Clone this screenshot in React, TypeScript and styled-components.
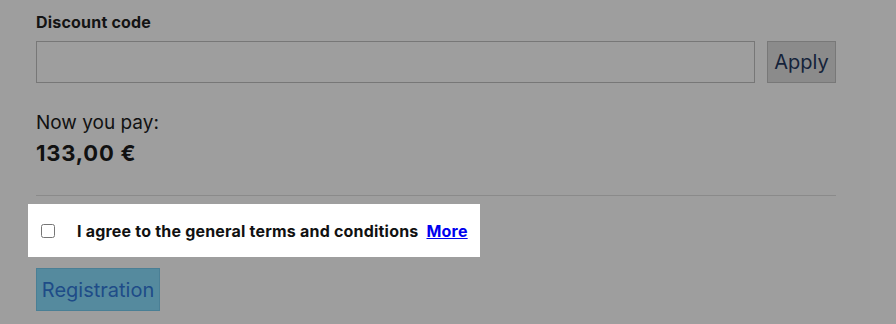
import React from "react";
import styled, { createGlobalStyle } from "styled-components";

const Global = createGlobalStyle`
  html, body { margin: 0; padding: 0; background: #9e9e9e; }
  body { font-family: "Inter", "Lato", "Liberation Sans", sans-serif; color: #111; }
`;

const Page = styled.div`
  width: 800px;
  padding: 12px 0 0 36px;
  display: flex;
  flex-direction: column;
`;

const Label = styled.label`
  font-size: 16px;
  font-weight: 700;
  letter-spacing: 0.2px;
  line-height: 20px;
  color: #141414;
`;

const CodeRow = styled.div`
  display: flex;
  gap: 12px;
  margin-top: 9px;
`;

const CodeInput = styled.input`
  flex: 1;
  height: 42px;
  box-sizing: border-box;
  border: 1px solid #777;
  background: transparent;
  font: inherit;
`;

const ApplyButton = styled.button`
  width: 69px;
  height: 42px;
  box-sizing: border-box;
  border: 1px solid #787878;
  background: #8b8b8b;
  color: #15233a;
  font-family: inherit;
  font-size: 20px;
  padding: 0;
`;

const PayLabel = styled.div`
  margin-top: 28px;
  font-size: 19px;
  line-height: 24px;
`;

const Price = styled.div`
  margin-top: 5px;
  font-size: 22px;
  font-weight: 700;
  letter-spacing: 0.8px;
  line-height: 26px;
`;

const Divider = styled.hr`
  margin: 29px 0 0;
  border: 0;
  border-top: 1px solid #8a8a8a;
`;

const Highlight = styled.div`
  align-self: flex-start;
  margin: 8px 0 0 -8px;
  height: 53px;
  box-sizing: border-box;
  padding: 0 12px 0 13px;
  background: #fff;
  display: flex;
  align-items: center;
`;

const Check = styled.input`
  width: 14px;
  height: 14px;
  margin: 1px 22px 0 0;
`;

const TermsText = styled.span`
  font-size: 16px;
  font-weight: 700;
  letter-spacing: 0.2px;
  color: #111;
`;

const MoreLink = styled.a`
  margin-left: 8px;
  font-size: 16px;
  font-weight: 700;
  letter-spacing: 0.2px;
  color: #0000ee;
  text-decoration: underline;
`;

const RegisterButton = styled.button`
  align-self: flex-start;
  margin-top: 11px;
  width: 124px;
  height: 43px;
  box-sizing: border-box;
  border: 1px solid #4a7f95;
  background: #558a9e;
  color: #1e4c88;
  font-family: inherit;
  font-size: 20px;
  padding: 0;
`;

export default function App() {
  return (
    <>
      <Global />
      <Page>
        <Label htmlFor="code">Discount code</Label>
        <CodeRow>
          <CodeInput id="code" />
          <ApplyButton>Apply</ApplyButton>
        </CodeRow>
        <PayLabel>Now you pay:</PayLabel>
        <Price>133,00 €</Price>
        <Divider />
        <Highlight>
          <Check type="checkbox" />
          <TermsText>I agree to the general terms and conditions</TermsText>
          <MoreLink href="#">More</MoreLink>
        </Highlight>
        <RegisterButton>Registration</RegisterButton>
      </Page>
    </>
  );
}
